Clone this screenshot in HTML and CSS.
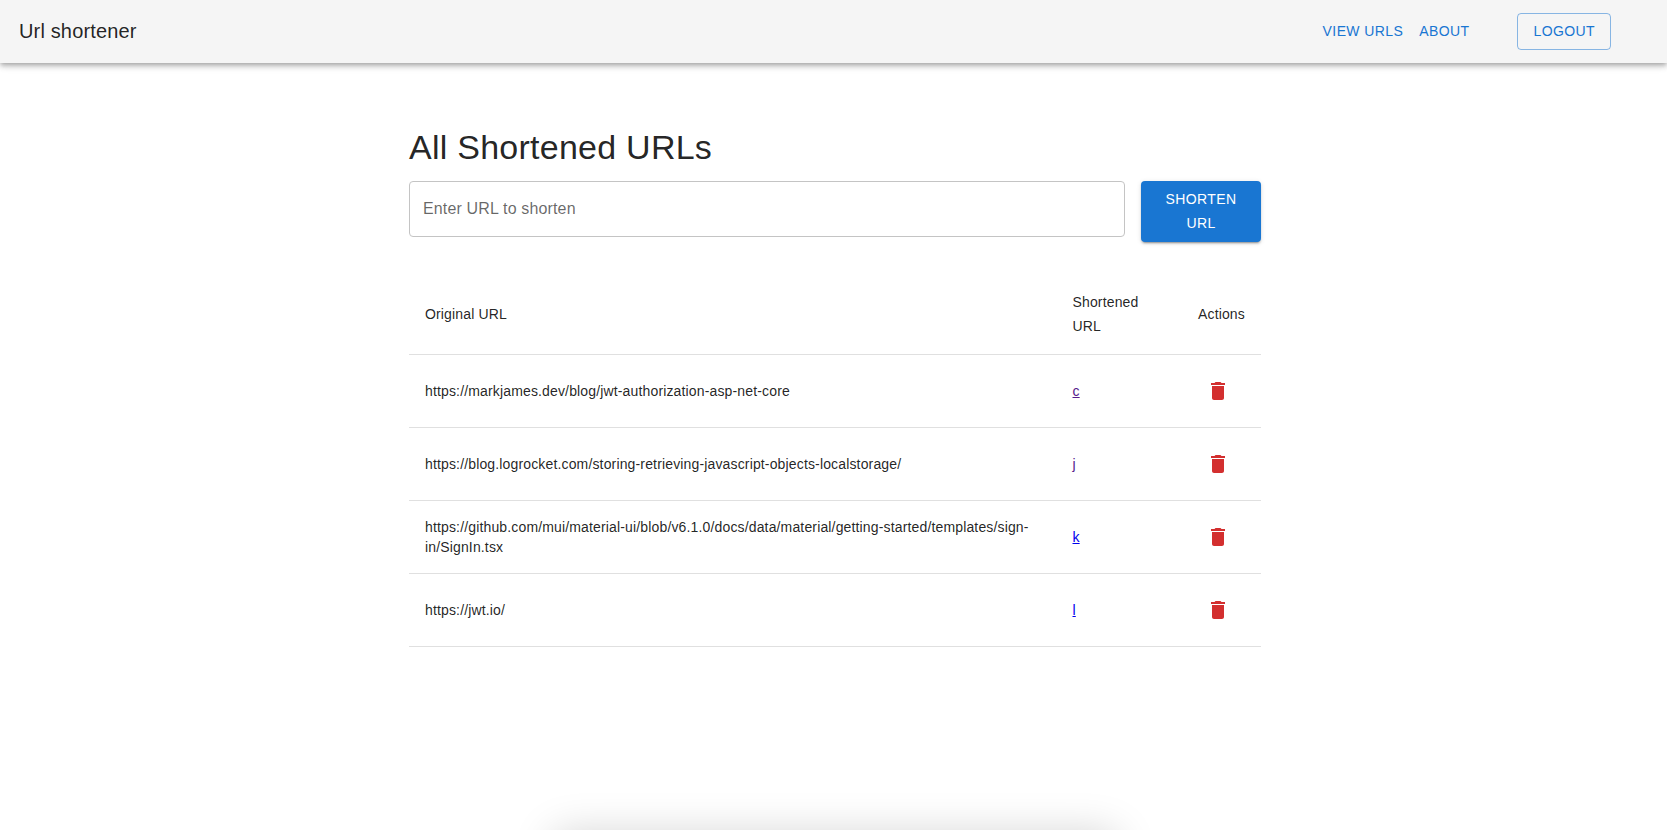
FILE: index.html
```html
<!DOCTYPE html>
<html lang="en">
<head>
<meta charset="utf-8">
<title>Url shortener</title>
<link rel="stylesheet" href="styles.css">
</head>
<body>
<svg class="sprite" width="0" height="0" aria-hidden="true">
  <symbol id="delete" viewBox="0 0 24 24"><path d="M6 19c0 1.100.9 2 2 2h8c1.100 0 2-.9 2-2V7H6zM19 4h-3.500l-1-1h-5l-1 1H5v2h14z"/></symbol>
</svg>
<header class="appbar">
  <div class="brand">Url shortener</div>
  <nav class="nav">
    <a class="nav-link">VIEW URLS</a>
    <a class="nav-link">ABOUT</a>
    <button class="logout">LOGOUT</button>
  </nav>
</header>
<main class="container">
  <h1 class="title">All Shortened URLs</h1>
  <form class="form">
    <input class="field" type="text" placeholder="Enter URL to shorten">
    <button class="submit" type="button">SHORTEN URL</button>
  </form>
  <table class="table">
    <colgroup><col class="col-original"><col class="col-short"><col class="col-actions"></colgroup>
    <thead>
      <tr><th>Original URL</th><th>Shortened URL</th><th>Actions</th></tr>
    </thead>
    <tbody>
      <tr><td>https://markjames.dev/blog/jwt-authorization-asp-net-core</td><td><a class="link visited" href="#c">c</a></td><td><button type="button" class="icon-button" aria-label="delete"><svg class="icon"><use href="#delete"/></svg></button></td></tr>
      <tr><td>https://blog.logrocket.com/storing-retrieving-javascript-objects-localstorage/</td><td><a class="link visited" href="#j">j</a></td><td><button type="button" class="icon-button" aria-label="delete"><svg class="icon"><use href="#delete"/></svg></button></td></tr>
      <tr><td>https://github.com/mui/material-ui/blob/v6.1.0/docs/data/material/getting-started/templates/sign-in/SignIn.tsx</td><td><a class="link" href="#k">k</a></td><td><button type="button" class="icon-button" aria-label="delete"><svg class="icon"><use href="#delete"/></svg></button></td></tr>
      <tr><td>https://jwt.io/</td><td><a class="link" href="#l">l</a></td><td><button type="button" class="icon-button" aria-label="delete"><svg class="icon"><use href="#delete"/></svg></button></td></tr>
    </tbody>
  </table>
</main>
<div class="bottom-shadow"></div>
</body>
</html>
```

FILE: styles.css
```css
* { box-sizing: border-box; }
html, body { height: 100%; }
body {
  margin: 0;
  overflow: hidden;
  position: relative;
  background: #fff;
  color: rgba(0, 0, 0, 0.87);
  font-family: "Liberation Sans", Arial, sans-serif;
}
button, input { font-family: inherit; margin: 0; }
.sprite { position: absolute; }
.appbar {
  height: 63px;
  padding: 0 56px 0 19px;
  display: flex;
  align-items: center;
  justify-content: space-between;
  background: #f5f5f5;
  box-shadow: 0 2px 4px -1px rgba(0,0,0,.2), 0 4px 5px 0 rgba(0,0,0,.14), 0 1px 10px 0 rgba(0,0,0,.12);
}
.brand { font-size: 20px; line-height: 32px; letter-spacing: 0.15px; padding-bottom: 2px; }
.nav { display: flex; align-items: center; }
.nav-link, .logout {
  font-size: 14px;
  line-height: 24.5px;
  letter-spacing: 0.4px;
  color: #1976d2;
}
.nav-link { padding: 6px 8px; }
.logout {
  margin-left: 40px;
  padding: 5px 15px;
  border: 1px solid rgba(25, 118, 210, 0.5);
  border-radius: 4px;
  background: transparent;
}
.container { width: 852px; margin-left: 409px; padding-top: 63px; }
.title {
  margin: 0 0 13px;
  font-size: 34px;
  line-height: 42px;
  font-weight: 400;
  letter-spacing: 0.25px;
}
.form { display: flex; align-items: flex-start; gap: 16px; margin-bottom: 32px; }
.field {
  flex: 1;
  min-width: 0;
  height: 56px;
  padding: 0 13px;
  border: 1px solid #c4c4c4;
  border-radius: 4px;
  font-size: 16px;
  letter-spacing: 0.15px;
}
.field::placeholder { color: rgba(0, 0, 0, 0.6); opacity: 1; }
.submit {
  width: 120px;
  height: 61px;
  padding: 6px 16px 7px;
  border: 0;
  border-radius: 4px;
  background: #1976d2;
  color: #fff;
  font-size: 14px;
  line-height: 24px;
  letter-spacing: 0.4px;
  box-shadow: 0 3px 1px -2px rgba(0,0,0,.2), 0 2px 2px 0 rgba(0,0,0,.14), 0 1px 5px 0 rgba(0,0,0,.12);
}
.table { width: 100%; table-layout: fixed; border-collapse: separate; border-spacing: 0; }
.col-original { width: 647.5px; }
.col-short { width: 125.5px; }
.col-actions { width: 79px; }
th, td {
  padding: 16px;
  border-bottom: 1px solid #e0e0e0;
  text-align: left;
  vertical-align: middle;
  font-size: 14px;
  font-weight: 400;
  letter-spacing: 0.15px;
  line-height: 20px;
}
th { line-height: 24px; }
td { height: 73px; }
.link { color: #0000ee; }
.visited { color: #551a8b; }
.icon-button { display: block; padding: 8px; border: 0; background: none; color: #d32f2f; }
.icon { display: block; width: 24px; height: 24px; fill: currentColor; }
.bottom-shadow {
  position: absolute;
  left: 480px;
  bottom: 0;
  width: 710px;
  height: 60px;
  overflow: hidden;
  pointer-events: none;
}
.bottom-shadow::before {
  content: "";
  display: block;
  margin: 64px 74px 0;
  height: 60px;
  border-radius: 12px;
  box-shadow: 0 0 40px 2px rgba(0, 0, 0, 0.17);
}
```
